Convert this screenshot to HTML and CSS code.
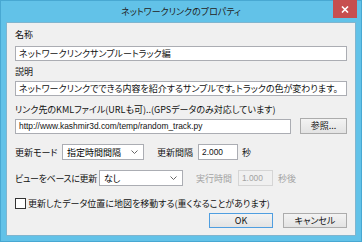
FILE: index.html
```html
<!DOCTYPE html>
<html lang="ja">
<head>
<meta charset="utf-8">
<link rel="stylesheet" href="styles.css">
</head>
<body>
<div class="window">
  <div class="titlebar">
    <span class="title">ネットワークリンクのプロパティ</span>
    <span class="close">
      <svg width="8" height="7" viewBox="0 0 8 7"><path d="M1 0.5L7 6.5M7 0.5L1 6.5" stroke="#fff" stroke-width="1.6"/></svg>
    </span>
  </div>
  <div class="client">
    <div class="label first">名称</div>
    <div class="input wide">ネットワークリンクサンプルートラック編</div>
    <div class="label">説明</div>
    <div class="input wide">ネットワークリンクでできる内容を紹介するサンプルです。トラックの色が変わります。</div>
    <div class="label kml">リンク先のKMLファイル(URLも可)..(GPSデータのみ対応しています)</div>
    <div class="row urlrow">
      <div class="input url latin">http://www.kashmir3d.com/temp/random_track.py</div>
      <div class="button browse">参照...</div>
    </div>
    <div class="row r2">
      <span class="lbl">更新モード</span>
      <div class="select sel1"><span>指定時間間隔</span><svg class="arrow" width="7" height="4" viewBox="0 0 7 4"><path d="M0.5 0.5L3.5 3.5L6.5 0.5" fill="none" stroke="#666" stroke-width="1"/></svg></div>
      <span class="lbl gap1">更新間隔</span>
      <div class="input num latin">2.000</div>
      <span class="lbl sec">秒</span>
    </div>
    <div class="row r3">
      <span class="lbl tight">ビューをベースに更新</span>
      <div class="select sel2"><span>なし</span><svg class="arrow" width="7" height="4" viewBox="0 0 7 4"><path d="M0.5 0.5L3.5 3.5L6.5 0.5" fill="none" stroke="#666" stroke-width="1"/></svg></div>
      <span class="lbl dis gap1">実行時間</span>
      <div class="input num2 latin dis">1.000</div>
      <span class="lbl dis sec2">秒後</span>
    </div>
    <div class="row r4">
      <span class="check"></span>
      <span class="lbl chk">更新したデータ位置に地図を移動する(重くなることがあります)</span>
    </div>
    <div class="row btns">
      <div class="button ok">OK</div>
      <div class="button cancel">キャンセル</div>
    </div>
  </div>
</div>
</body>
</html>
```
FILE: styles.css
```css
* { box-sizing: border-box; }
html, body { margin: 0; padding: 0; }
body {
  width: 362px; height: 242px; overflow: hidden;
  font-family: "Noto Sans CJK JP", "Liberation Sans", sans-serif;
  font-size: 9px;
  font-feature-settings: "palt";
  color: #111;
}
.window {
  width: 362px; height: 242px;
  background: #62c2e8;
  border: 1px solid #48a8d2;
  display: flex; flex-direction: column;
}
.titlebar {
  position: relative;
  height: 21px;
  display: flex; align-items: center; justify-content: center;
}
.title { color: #222; line-height: 12px; margin-top: 1px; }
.close {
  position: absolute; right: 4px; top: -1px;
  width: 24px; height: 18px;
  background: #c74f4f;
  display: flex; align-items: center; justify-content: center;
}
.client {
  margin: 0 5px 5px 5px;
  flex: 1;
  background: #f0f0f0;
  border: 1px solid #7fb5cf;
  padding: 5px 8px 0 8px;
  display: flex; flex-direction: column;
}
.label { height: 14px; line-height: 14px; white-space: nowrap; }
.label + .input { margin-top: 2px; }
.input + .label { margin-top: 4px; }
.first + .input { margin-top: 4px; }
.input {
  height: 15px; line-height: 13px;
  background: #fff; border: 1px solid #abadb3;
  padding: 0 3px;
  white-space: nowrap; overflow: hidden;
}
.wide { width: 100%; }
.label.kml { margin-top: 7px; }
.latin { font-family: "Liberation Sans", sans-serif; font-size: 8.4px; }
.row { display: flex; align-items: center; }
.urlrow { margin-top: 1px; height: 16px; }
.url { width: 276px; }
.button {
  height: 16px; line-height: 14px; text-align: center;
  background: linear-gradient(#f3f3f3, #e3e3e3);
  border: 1px solid #acacac;
}
.browse { width: 47px; margin-left: 9px; }
.lbl { white-space: nowrap; }
.tight { letter-spacing: -0.35px; }
.select {
  height: 16px; background: #fff; border: 1px solid #abadb3;
  display: flex; justify-content: space-between; align-items: center;
  padding: 0 5px 0 4px; color: #000;
}
.arrow { display: block; }
.r2 { margin-top: 10px; height: 16px; }
.r2 .input, .r3 .input { height: 16px; line-height: 14px; }
.sel1 { width: 82px; margin-left: 4.5px; }
.sel2 { width: 84px; margin-left: 2px; }
.gap1 { margin-left: 13px; }
.num { width: 40px; margin-left: 5px; }
.sec { margin-left: 4px; }
.num2 { width: 35px; margin-left: 6px; border-color: #d5d5d5; background: #f0f0f0; }
.sec2 { margin-left: 5px; }
.dis { color: #a3a3a3; }
.r3 { margin-top: 10px; height: 16px; }
.r4 { margin-top: 12px; height: 11px; }
.check { width: 11px; height: 11px; background: #fff; border: 1px solid #333; margin-right: 2px; flex: none; }
.btns { margin-top: 4px; justify-content: flex-end; gap: 10px; padding-right: 0; }
.btns .button { height: 15px; line-height: 13px; }
.ok { width: 64px; border-color: #4f9ee0; }
.cancel { width: 64px; }
```
